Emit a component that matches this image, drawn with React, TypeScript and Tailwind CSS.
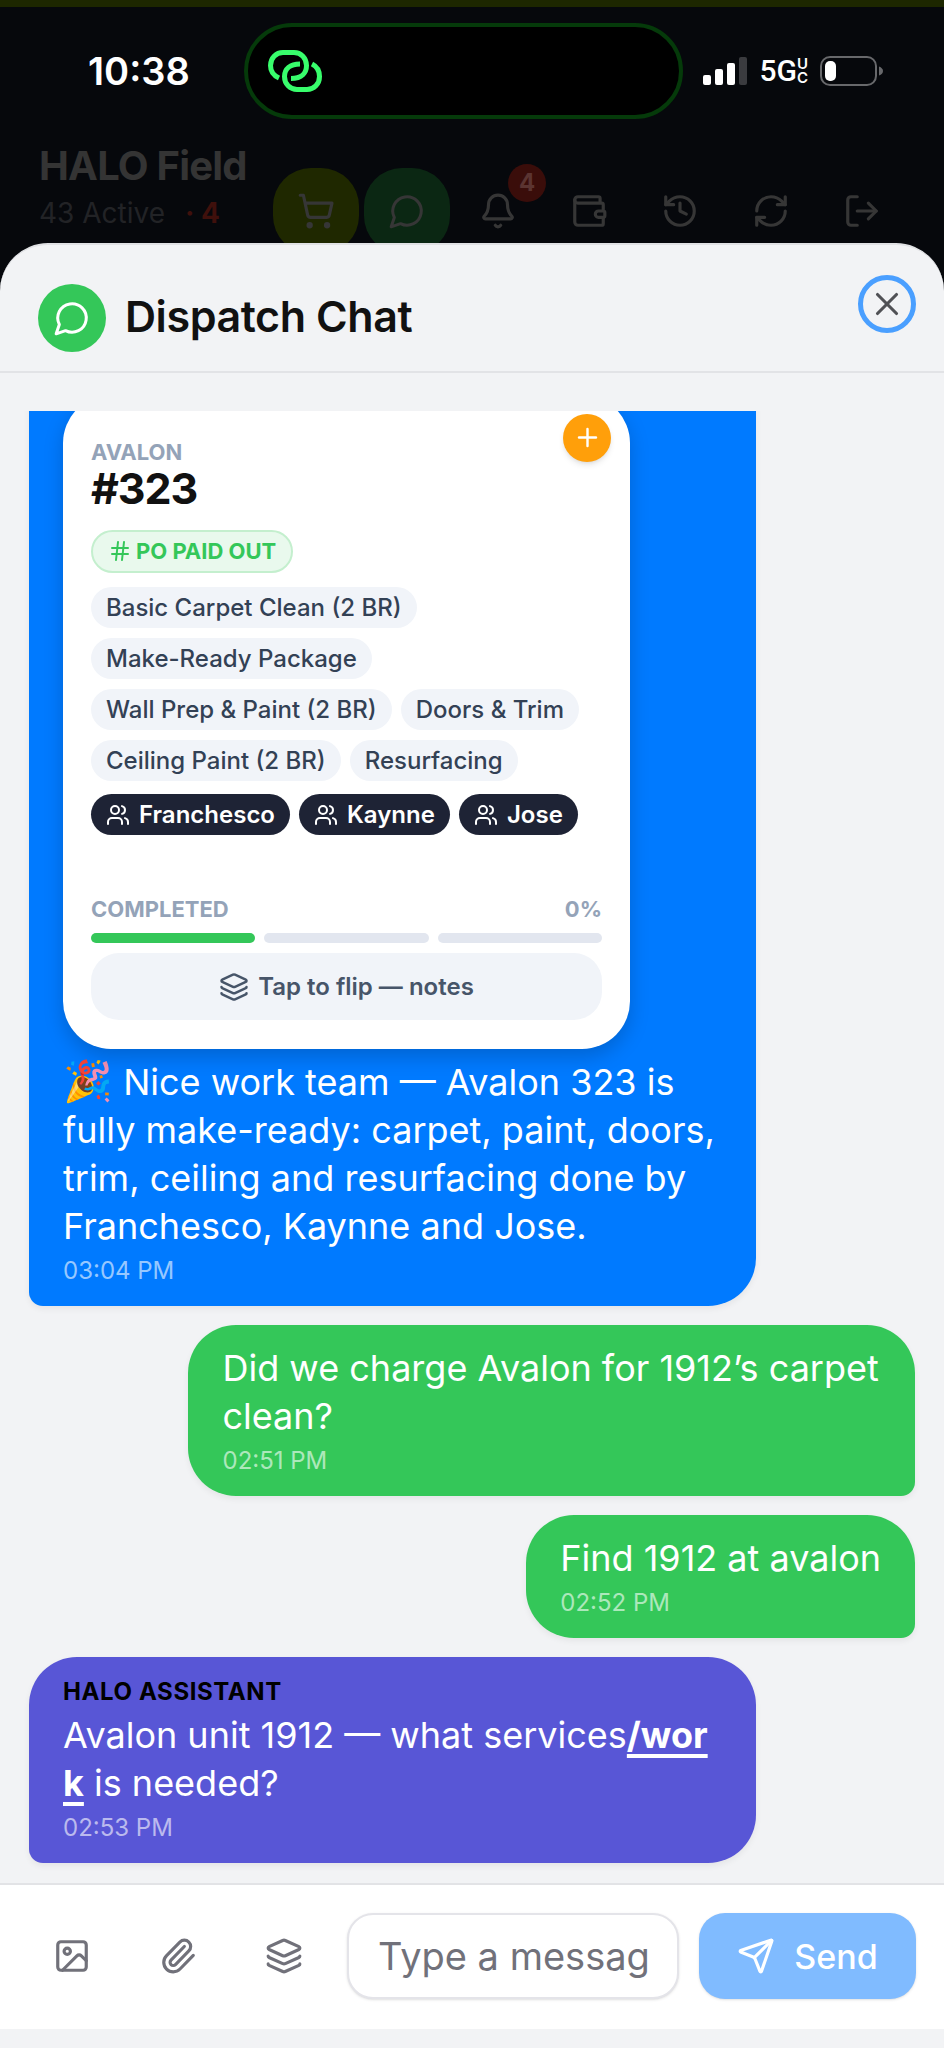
import type { ReactNode } from "react";
import {
  Bell,
  Hash,
  History,
  Image,
  Layers,
  LogOut,
  Paperclip,
  Plus,
  RefreshCw,
  Send,
  ShoppingCart,
  Users,
  Wallet,
  X,
} from "lucide-react";

const services = [
  "Basic Carpet Clean (2 BR)",
  "Make-Ready Package",
  "Wall Prep & Paint (2 BR)",
  "Doors & Trim",
  "Ceiling Paint (2 BR)",
  "Resurfacing",
];

const crew = ["Franchesco", "Kaynne", "Jose"];

const navItems = [
  { label: "Wallet", icon: Wallet },
  { label: "History", icon: History },
  { label: "Refresh", icon: RefreshCw },
  { label: "Log out", icon: LogOut },
];

const attachItems = [
  { label: "Add photo", icon: Image },
  { label: "Attach file", icon: Paperclip },
  { label: "Share card", icon: Layers },
];

function ChatIcon({ size }: { size: number }) {
  return (
    <svg
      width={size}
      height={size}
      viewBox="0 0 24 24"
      fill="none"
      stroke="currentColor"
      strokeWidth="1.9"
      strokeLinecap="round"
      strokeLinejoin="round"
      aria-hidden="true"
    >
      <path d="M7.9 20A9 9 0 1 0 4 16.1L2 22Z" />
    </svg>
  );
}

function StatusBar() {
  return (
    <div className="flex items-center px-[60px] pt-4">
      <div className="w-[184px] pl-7 text-[38px] font-semibold leading-[44px] text-white">10:38</div>

      {/* Dynamic island */}
      <div className="flex h-24 flex-1 items-center rounded-full border-4 border-[#053a0a] bg-black pl-5">
        <svg width="54" height="42" viewBox="0 0 54 42" fill="none" stroke="#38fd6c" strokeWidth="5" aria-hidden="true">
          <path d="M11 28C5.500 25.500 2.500 21.500 2.500 15.500C2.500 8 8 2.500 15 2.500H26C33 2.500 38.500 8 38.500 15.500C38.500 22.500 34 28.500 23 28.500" />
          <path d="M44 14C49 16.500 51.500 21 51.500 26.500C51.500 34 46 39.500 39 39.500H29C22 39.500 16.500 34 16.500 26.500C16.500 19 22 14 32 14" />
        </svg>
      </div>

      <div className="flex items-center pl-5">
        <svg width="44" height="28" viewBox="0 0 44 28" fill="#fff" aria-hidden="true">
          <rect x="0" y="18" width="8" height="10" rx="2" />
          <rect x="12" y="12" width="8" height="16" rx="2" />
          <rect x="24" y="6" width="8" height="22" rx="2" />
          <rect x="36" y="0" width="8" height="28" rx="2" fill="#3a3b3f" />
        </svg>
        <div className="ml-3 flex items-center text-white">
          <span className="font-[Roboto] text-[30px] font-medium leading-8">5G</span>
          <span className="flex flex-col text-[15px] font-semibold leading-[14px]">
            <span>U</span>
            <span>C</span>
          </span>
        </div>
        <svg className="ml-3" width="64" height="30" viewBox="0 0 64 30" aria-hidden="true">
          <rect x="1" y="1" width="55" height="28" rx="9" fill="none" stroke="#67686b" strokeWidth="2" />
          <rect x="5" y="5" width="11" height="20" rx="5" fill="#fff" />
          <path d="M59 10.500C61.500 11.500 63 13 63 15C63 17 61.500 18.500 59 19.500Z" fill="#67686b" />
        </svg>
      </div>
    </div>
  );
}

function AppHeader() {
  return (
    <div className="flex items-start justify-between px-[39px] pt-[23px]">
      <div>
        <h1 className="whitespace-nowrap text-[40px] font-bold leading-[48px] tracking-[-0.02em] text-[#343434]">HALO Field</h1>
        <p className="flex gap-5 text-[28px] leading-[46px] text-[#222326]">
          <span>43 Active</span>
          <span className="font-bold text-[#3f100c]">· 4</span>
        </p>
      </div>
      <div className="mt-[26px] flex gap-[5px] text-[#363636]">
        <button type="button" aria-label="Cart" className="flex size-[86px] items-center justify-center rounded-[38px] bg-[#1f2800]">
          <ShoppingCart size={38} />
        </button>
        <button type="button" aria-label="Chat" className="flex size-[86px] items-center justify-center rounded-[38px] bg-[#0b2713]">
          <ChatIcon size={38} />
        </button>
        <button type="button" aria-label="Notifications" className="relative flex size-[86px] items-center justify-center">
          <Bell size={38} />
          <span className="absolute -top-1 right-[-5px] flex size-[38px] items-center justify-center rounded-full bg-[#3a0d0a] text-[24px] font-bold text-[#5b3431]">
            4
          </span>
        </button>
        {navItems.map(({ label, icon: Icon }) => (
          <button key={label} type="button" aria-label={label} className="flex size-[86px] items-center justify-center">
            <Icon size={38} />
          </button>
        ))}
      </div>
    </div>
  );
}

function UnitCard() {
  return (
    <article className="relative mb-[9px] mt-10 w-[567px] rounded-[48px] bg-white px-7 pb-[29px] pt-10 shadow-[0_8px_20px_rgba(0,0,0,0.18)]">
      <button
        type="button"
        aria-label="Add"
        className="absolute right-[19px] top-[19px] flex size-12 items-center justify-center rounded-full bg-[#ff9f0a] text-white shadow-md"
      >
        <Plus size={29} strokeWidth={2} />
      </button>

      <p className="text-[22px] font-bold leading-[34px] text-[#94a3b8]">AVALON</p>
      <h3 className="text-[43px] font-bold leading-[38px] tracking-tight text-[#111]">#323</h3>

      <span className="mt-[23px] inline-flex h-[43px] items-center gap-1 rounded-full border-2 border-[#c4efce] bg-[#e9f9ed] px-[15px] text-[22px] font-bold text-[#34c759]">
        <Hash size={24} strokeWidth={2} />
        PO PAID OUT
      </span>

      <ul className="mt-[13px] flex flex-wrap gap-x-[9px] gap-y-[10px]">
        {services.map((s) => (
          <li key={s} className="flex h-[41px] items-center rounded-full bg-[#f1f4f9] px-[15px] text-[24px] font-medium text-[#334155]">
            {s}
          </li>
        ))}
      </ul>

      <ul className="mt-[13px] flex gap-[9px]">
        {crew.map((name) => (
          <li key={name} className="flex h-[41px] items-center gap-[9px] rounded-full bg-[#1e2335] px-[15px] text-[24px] font-semibold text-white">
            <Users size={24} strokeWidth={2} />
            {name}
          </li>
        ))}
      </ul>

      <div className="mt-[58px] flex justify-between text-[22px] font-bold leading-[33px] text-[#94a3b8]">
        <span>COMPLETED</span>
        <span>0%</span>
      </div>
      <div className="mt-[7px] flex gap-[9px]">
        <span className="h-[10px] flex-1 rounded-full bg-[#34c759]" />
        <span className="h-[10px] flex-1 rounded-full bg-[#e2e6ef]" />
        <span className="h-[10px] flex-1 rounded-full bg-[#e2e6ef]" />
      </div>
      <button
        type="button"
        className="mt-[10px] flex h-[67px] w-full items-center justify-center gap-[9px] rounded-[28px] bg-[#f1f4f9] text-[24px] font-semibold text-[#475569]"
      >
        <Layers size={30} strokeWidth={2} />
        Tap to flip — notes
      </button>
    </article>
  );
}

type BubbleProps = {
  tone: "blue" | "green" | "purple";
  time: string;
  children: ReactNode;
};

const bubbleTones = {
  blue: "self-start rounded-bl-[14px] bg-[#007aff]",
  green: "self-end rounded-br-[14px] bg-[#34c759]",
  purple: "self-start rounded-bl-[14px] bg-[#5856d6]",
};

function Bubble({ tone, time, children }: BubbleProps) {
  return (
    <div
      className={`max-w-[82%] shrink-0 rounded-[48px] px-[34px] py-[19px] text-[36px] leading-[48px] text-white shadow-[0_3px_6px_rgba(0,0,0,0.06)] ${bubbleTones[tone]}`}
    >
      {children}
      <time className="mt-1 block text-[24px] leading-[33px] text-white/60">{time}</time>
    </div>
  );
}

export default function App() {
  return (
    <div className="flex h-screen flex-col bg-[#06080c] font-[Inter,sans-serif]">
      <div className="h-[243px] shrink-0 border-t-[7px] border-[#1d2700]">
        <StatusBar />
        <AppHeader />
      </div>

      <section className="flex min-h-0 flex-1 flex-col rounded-t-[48px] border-t-2 border-[#e0e1e4] bg-[#f2f3f5]">
        <header className="flex h-[128px] shrink-0 items-start justify-between border-b-2 border-[#e2e3e6] pl-[38px] pr-7">
          <div className="mt-[39px] flex items-center gap-[19px]">
            <span className="flex size-[68px] items-center justify-center rounded-full bg-[#34c759] text-white">
              <ChatIcon size={38} />
            </span>
            <h2 className="pb-1 text-[43px] font-semibold tracking-[-0.01em] text-[#111]">Dispatch Chat</h2>
          </div>
          <button
            type="button"
            aria-label="Close"
            className="mt-[30px] flex size-[58px] items-center justify-center rounded-full border-[5px] border-[#4a9fff] text-[#505155]"
          >
            <X size={38} strokeWidth={2} />
          </button>
        </header>

        {/* Messages, pinned to the newest one */}
        <div className="flex min-h-0 flex-1 flex-col px-[29px] pt-[38px]">
          <div className="flex min-h-0 flex-1 flex-col justify-end gap-[19px] overflow-y-clip pb-5">
            <Bubble tone="blue" time="03:04 PM">
              <UnitCard />
              <p>
                <span className="text-[40px] leading-none">🎉</span> Nice work team — Avalon 323 is fully make-ready: carpet, paint, doors, trim, ceiling and
                resurfacing done by Franchesco, Kaynne and Jose.
              </p>
            </Bubble>
            <Bubble tone="green" time="02:51 PM">
              <p>Did we charge Avalon for 1912’s carpet clean?</p>
            </Bubble>
            <Bubble tone="green" time="02:52 PM">
              <p>Find 1912 at avalon</p>
            </Bubble>
            <Bubble tone="purple" time="02:53 PM">
              <p className="mb-[3px] text-[24px] font-bold leading-8 tracking-wide text-black">HALO ASSISTANT</p>
              <p className="break-all">
                Avalon unit 1912 — what services
                <a href="#work" className="font-bold underline decoration-4 underline-offset-[6px] [text-decoration-skip-ink:none]">/work</a> is needed?
              </p>
            </Bubble>
          </div>
        </div>

        <form className="mb-[19px] flex shrink-0 items-center gap-5 border-t-2 border-[#e2e3e6] bg-white pb-[30px] pl-[29px] pr-7 pt-7">
          {attachItems.map(({ label, icon: Icon }) => (
            <button key={label} type="button" aria-label={label} className="flex size-[86px] shrink-0 items-center justify-center text-[#71717a]">
              <Icon size={38} />
            </button>
          ))}
          <input
            type="text"
            aria-label="Message"
            placeholder="Type a message…"
            className="h-[86px] min-w-0 flex-1 rounded-[26px] border-2 border-[#e4e4e9] bg-white px-[29px] text-[38px] text-[#111] shadow-sm placeholder:text-[#71717a]"
          />
          <button
            type="button"
            className="flex h-[86px] w-[217px] shrink-0 items-center justify-center gap-[19px] rounded-[26px] bg-[#80bbff] text-[34px] font-medium text-white shadow-sm"
          >
            <Send size={38} />
            Send
          </button>
        </form>
      </section>
    </div>
  );
}
